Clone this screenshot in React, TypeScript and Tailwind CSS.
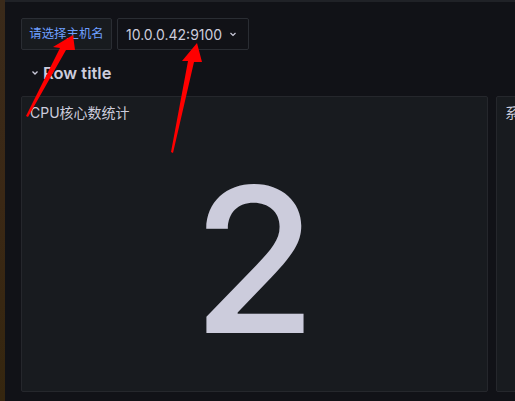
import React from "react";

export default function App() {
  return (
    <div className="relative flex h-[401px] w-[515px] overflow-hidden bg-[#111217] font-['Inter','Noto_Sans_CJK_SC',sans-serif] text-[#ccccdc]">
      <div className="h-full w-[5px] shrink-0 bg-gradient-to-b from-[#3a2a1a] via-[#3b2815] to-[#35260f]" />
      <div className="flex min-w-0 flex-1 flex-col">
        <div className="h-[2px] w-full bg-[#202227]" />
        <div className="flex flex-1 flex-col pl-[16px] pt-[16px]">
          <div className="flex gap-[5px]">
            <div className="flex h-[32px] w-[91px] items-center justify-center rounded-[2px] border border-[#2a2d33] bg-[#181b1f] text-[12.4px] text-[#6e9fff]">
              请选择主机名
            </div>
            <div className="flex h-[32px] w-[132px] items-center rounded-[2px] border border-[#2a2d33] bg-[#111217] pl-[8px] text-[14px] text-[#ccccdc]">
              <span>10.0.0.42:9100</span>
              <svg className="ml-[6px]" width="10" height="10" viewBox="0 0 10 10">
                <path d="M2.5 4 L5 6.5 L7.5 4" fill="none" stroke="#ccccdc" strokeWidth="1.2" />
              </svg>
            </div>
          </div>
          <div className="flex h-[46px] items-center">
            <svg className="ml-[6px]" width="16" height="16" viewBox="0 0 16 16">
              <path d="M5.5 6.5 L8 9 L10.5 6.5" fill="none" stroke="#ccccdc" strokeWidth="1.3" />
            </svg>
            <span className="text-[16.5px] font-semibold leading-none">Row title</span>
          </div>
          <div className="flex gap-[8px]">
            <div className="flex h-[296px] w-[467px] shrink-0 flex-col rounded-[2px] border border-[#25272c] bg-[#181b1f]">
              <div className="flex h-[31px] items-center px-[8px] text-[14px]">CPU核心数统计</div>
              <div className="flex flex-1 items-center justify-center">
                <span className="text-[202px] font-medium leading-none text-[#ccccdc]">2</span>
              </div>
            </div>
            <div className="flex h-[296px] w-[200px] shrink-0 flex-col rounded-[2px] border border-[#25272c] bg-[#181b1f]">
              <div className="flex h-[31px] items-center whitespace-nowrap px-[8px] text-[14px]">系统负载</div>
            </div>
          </div>
        </div>
      </div>
      <svg className="pointer-events-none absolute left-0 top-0" width="515" height="401" viewBox="0 0 515 401">
        <polygon points="26,116 60,48 53,47 73,35 75,50 66,50 28,117" fill="#ff0000" />
        <polygon points="171,152 188,61 182,61 197,43 202,62 194,62 173,153" fill="#ff0000" />
      </svg>
    </div>
  );
}
